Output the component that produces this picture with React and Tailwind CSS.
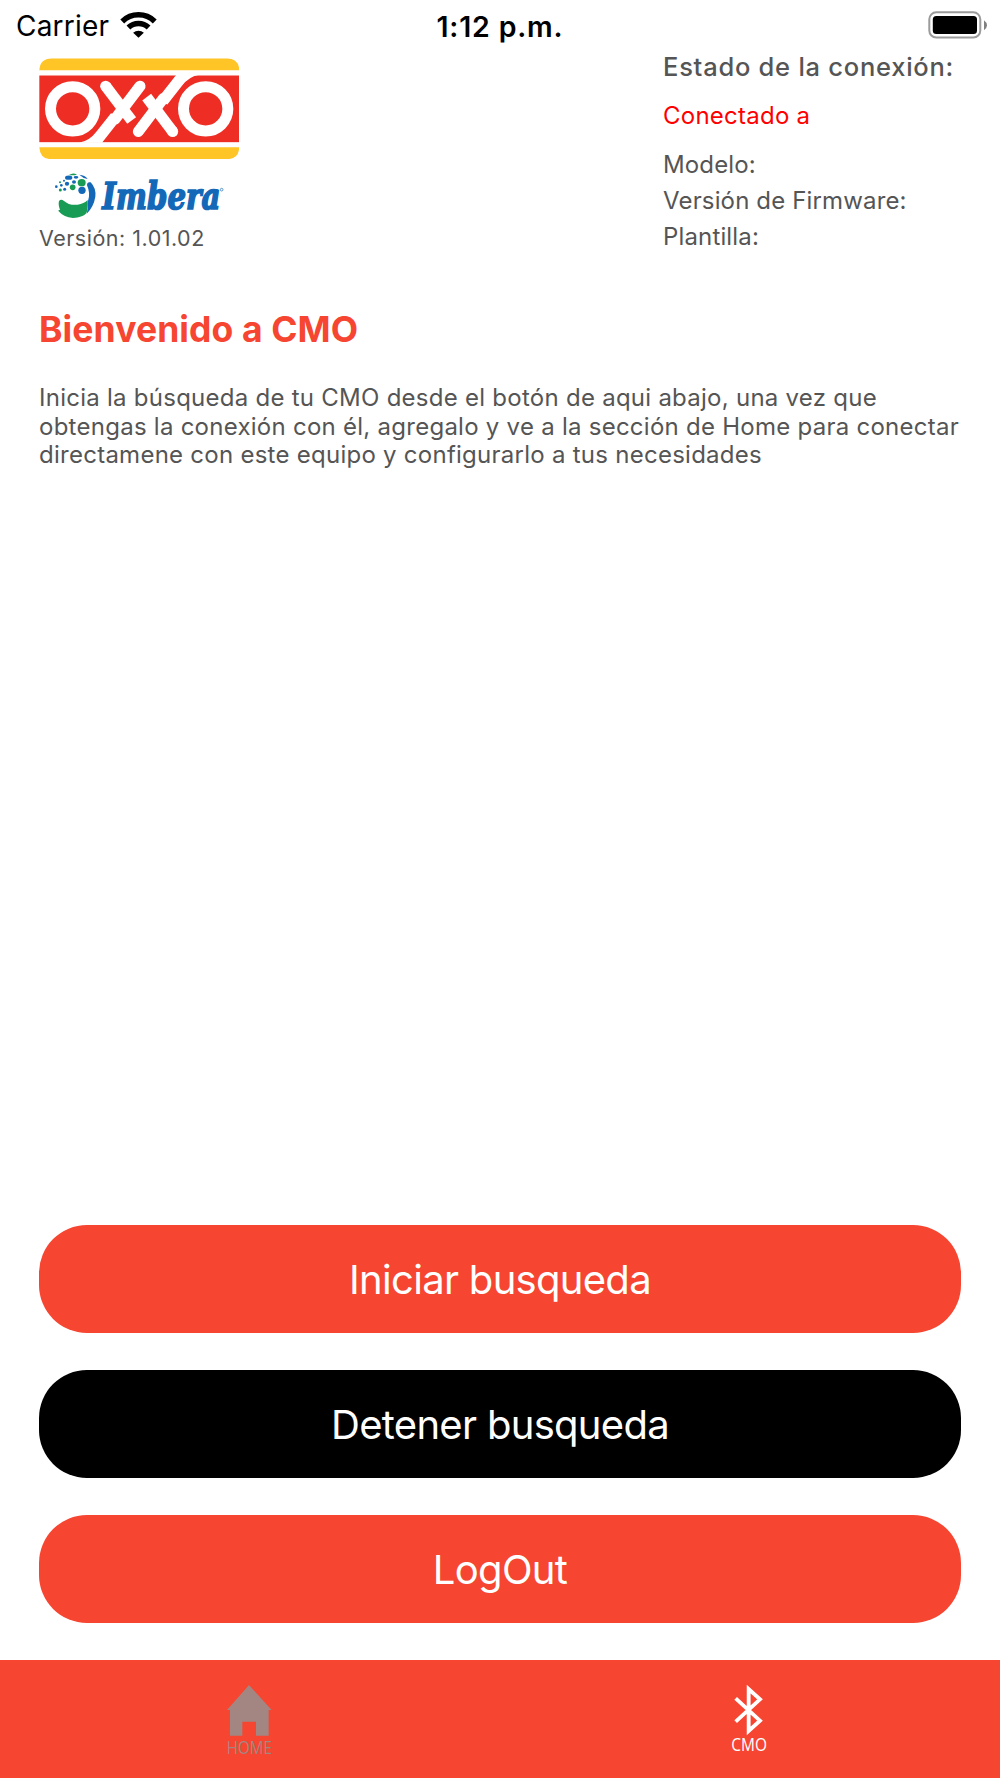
import React, { useState } from 'react';

function WifiIcon() {
  return (
    <svg className="mb-[3px] ml-[11px] h-[26px] w-[37px]" viewBox="361 31 110 80" fill="none">
      <path d="M366 60A72 72 0 0 1 466 60" stroke="#000" strokeWidth="17" />
      <path d="M385 79A45 45 0 0 1 447 79" stroke="#000" strokeWidth="17" />
      <path d="M416 110L399.500 95A24 24 0 0 1 432.500 95Z" fill="#000" />
    </svg>
  );
}

function BatteryIcon() {
  return (
    <svg className="mb-[2px] h-7 w-[60px]" viewBox="0 0 60 28">
      <rect x="1.300" y="1.300" width="51" height="25.200" rx="7" fill="none" stroke="#9b9b9b" strokeWidth="2" />
      <rect x="4.800" y="4.900" width="44.200" height="18.100" rx="3.500" fill="#000" />
      <path d="M56 9.200Q59 11.500 59 14.200Q59 17 56 19.300Z" fill="#808080" />
    </svg>
  );
}

function OxxoLogo() {
  return (
    <svg className="h-[101px] w-[200px]" viewBox="118 175 600 302" fill="none">
      <path d="M119 211Q121 176 156 176H682Q717 176 719 211Z" fill="#ffc425" />
      <path d="M119 442H719Q717 478 682 478H156Q121 478 119 442Z" fill="#ffc425" />
      <rect x="119" y="227" width="600" height="200" fill="#ee2e24" />
      {/* The mark is the same when turned upside down */}
      {[0, 180].map((angle) => (
        <g key={angle} transform={`rotate(${angle} 418.5 327)`}>
          <circle cx="219" cy="327" r="66.500" stroke="#fff" strokeWidth="33" />
          <circle cx="318" cy="259" r="16.500" fill="#fff" />
          <path d="M318 259L396 362" stroke="#fff" strokeWidth="33" />
          <path d="M421 259L346 358" stroke="#fff" strokeWidth="33" strokeLinecap="round" />
          <path d="M334 340L290 396Q269 424 238 429H307L366 354Z" fill="#fff" />
        </g>
      ))}
    </svg>
  );
}

function ImberaLogo() {
  return (
    <svg className="h-[48px] w-[180px] overflow-visible" viewBox="162 516 540 144">
      <path d="M261 556Q261 544 272 547Q289 565 286 590Q281 621 260 641Q265 624 264 603Q272 580 261 556Z" fill="#1468b8" />
      <path d="M177 603Q183 596 191 602Q208 617 233 614Q252 611 263 600Q265 625 259 640Q247 653 219 654Q191 652 176 634Q173 629 180 630Q174 614 177 603Z" fill="#179b55" />
      <g fill="#1468b8">
        <circle cx="246" cy="571" r="11" />
        <ellipse cx="206" cy="533" rx="11" ry="6.500" />
        <ellipse cx="201" cy="551" rx="6.500" ry="6" />
        <ellipse cx="222" cy="546" rx="6" ry="5" />
        <ellipse cx="228" cy="532" rx="7" ry="4" />
        <path d="M238 524Q255 525 263 537Q249 535 238 524Z" />
        <circle cx="184" cy="556" r="4" />
        <circle cx="194" cy="568" r="4.500" />
        <circle cx="169" cy="560" r="4" />
        <circle cx="192" cy="542" r="3" />
      </g>
      <g fill="#179b55">
        <ellipse cx="245" cy="548" rx="12" ry="11" />
        <circle cx="218" cy="562" r="8.500" />
        <path d="M207 525Q219 516 231 524Q219 527 207 525Z" />
        <circle cx="181" cy="570" r="4.500" />
        <circle cx="180" cy="547" r="3" />
      </g>
      <text
        x="307"
        y="626"
        textLength="354"
        lengthAdjust="spacingAndGlyphs"
        className="font-['DejaVu_Serif',serif] text-[112px] font-bold italic"
        fill="#1468b8"
        stroke="#1468b8"
        strokeWidth="5"
      >
        Imbera
      </text>
      <circle cx="665" cy="569" r="4" fill="none" stroke="#1468b8" strokeWidth="2" />
    </svg>
  );
}

function HomeIcon() {
  return (
    <svg className="-ml-[2px] h-[86px] w-[60px]" viewBox="58 84 180 258">
      <path d="M148 105L216 180H207V257H169V215H128V257H91V180H82Z" fill="#a38681" />
      <text x="81" y="313" textLength="136" lengthAdjust="spacingAndGlyphs" className="font-['Open_Sans'] text-[53px]" fill="#a38681">
        HOME
      </text>
    </svg>
  );
}

function BluetoothIcon() {
  return (
    <svg className="-ml-[2px] h-[86px] w-[60px]" viewBox="58 84 180 258">
      <path d="M108 145L181 212L147 243V117L181 148L108 215" fill="none" stroke="#fff" strokeWidth="11.500" />
      <text x="95" y="303" textLength="107" lengthAdjust="spacingAndGlyphs" className="font-['Open_Sans'] text-[53px]" fill="#fff">
        CMO
      </text>
    </svg>
  );
}

function ActionButton({ label, className, onClick }) {
  return (
    <button
      onClick={onClick}
      className={`flex h-[108.700px] w-full items-center justify-center rounded-[48px] pt-[2px] text-[40px] font-normal tracking-[-0.7px] text-white ${className}`}
    >
      {label}
    </button>
  );
}

function App() {
  const [tab, setTab] = useState('cmo');

  return (
    <div className="flex h-[1778px] w-[1000px] flex-col bg-white font-['Inter',sans-serif] text-[#555555]">
      {/* Status bar */}
      <div className="grid h-[50px] grid-cols-3 items-center px-4 text-black">
        <div className="flex items-center text-[28px] leading-[52px] tracking-[0.2px]">
          Carrier
          <WifiIcon />
        </div>
        <div className="pt-[1px] text-center text-[28.500px] leading-[50px] font-semibold tracking-[0.8px]">1:12 p.m.</div>
        <div className="-mr-[4.500px] flex justify-end">
          <BatteryIcon />
        </div>
      </div>

      <header className="flex justify-between pt-2 pr-[47px] pl-[39px]">
        <div className="flex flex-col">
          <OxxoLogo />
          <div className="pt-[13px] pl-[15px]">
            <ImberaLogo />
          </div>
          <p className="mt-[2px] text-[21.500px] leading-8 tracking-[0.5px]">Versión: 1.01.02</p>
        </div>
        <div className="w-[290px] whitespace-nowrap">
          <p className="text-[25.500px] leading-[18px] font-medium tracking-[0.750px]">Estado de la conexión:</p>
          <p className="mt-[22px] text-[24px] leading-9 tracking-[0.250px] text-[#ff0000]">Conectado a</p>
          <div className="mt-[12.600px] text-[24px] leading-[36.300px] tracking-[0.150px]">
            <p>Modelo:</p>
            <p>Versión de Firmware:</p>
            <p>Plantilla:</p>
          </div>
        </div>
      </header>

      <main className="flex grow flex-col pr-[39px] pl-[39px]">
        <h1 className="mt-[52.500px] text-[35.500px] leading-[44px] font-bold tracking-[0.1px] text-[#f64530]">Bienvenido a CMO</h1>
        <p className="mt-[32px] text-[24px] leading-[28.600px] tracking-[0.260px] whitespace-nowrap">
          Inicia la búsqueda de tu CMO desde el botón de aqui abajo, una vez que
          <br />
          obtengas la conexión con él, agregalo y ve a la sección de Home para conectar
          <br />
          directamene con este equipo y configurarlo a tus necesidades
        </p>
        <div className="mt-auto flex flex-col gap-[36.300px] pb-[36.300px]">
          <ActionButton label="Iniciar busqueda" className="bg-[#f64530]" />
          <ActionButton label="Detener busqueda" className="bg-black" />
          <ActionButton label="LogOut" className="bg-[#f64530]" />
        </div>
      </main>

      <nav className="grid h-[118.500px] shrink-0 grid-cols-2 bg-[#f64530]">
        <button aria-current={tab === 'home'} onClick={() => setTab('home')} className="flex justify-center pt-[18px]">
          <HomeIcon />
        </button>
        <button aria-current={tab === 'cmo'} onClick={() => setTab('cmo')} className="flex justify-center pt-[18px]">
          <BluetoothIcon />
        </button>
      </nav>
    </div>
  );
}

export default App;
